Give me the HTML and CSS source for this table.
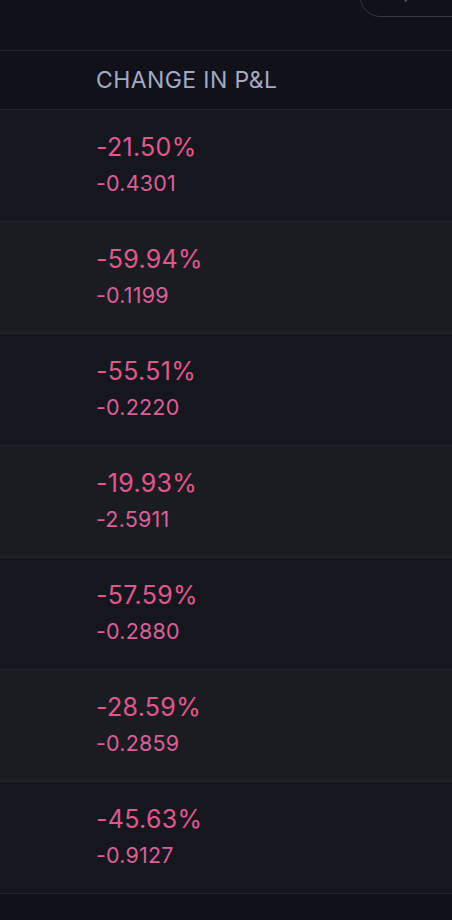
FILE: index.html
```html
<!DOCTYPE html>
<html>
<head>
<meta charset="utf-8">
<link rel="stylesheet" href="styles.css">
</head>
<body>
<div class="page">
  <div class="topbar">
    <div class="search"><span class="search-text">Input</span></div>
  </div>
  <div class="header"><span class="col-title">CHANGE IN P&amp;L</span></div>
  <div class="rows">
    <div class="row odd"><div class="cell"><div class="pct">-21.50%</div><div class="abs">-0.4301</div></div></div>
    <div class="row even"><div class="cell"><div class="pct">-59.94%</div><div class="abs">-0.1199</div></div></div>
    <div class="row odd"><div class="cell"><div class="pct">-55.51%</div><div class="abs">-0.2220</div></div></div>
    <div class="row even"><div class="cell"><div class="pct">-19.93%</div><div class="abs">-2.5911</div></div></div>
    <div class="row odd"><div class="cell"><div class="pct">-57.59%</div><div class="abs">-0.2880</div></div></div>
    <div class="row even"><div class="cell"><div class="pct">-28.59%</div><div class="abs">-0.2859</div></div></div>
    <div class="row odd"><div class="cell"><div class="pct">-45.63%</div><div class="abs">-0.9127</div></div></div>
  </div>
</div>
</body>
</html>
```
FILE: styles.css
```css
html, body {
  margin: 0;
  padding: 0;
  background: #111119;
}
body {
  font-family: Inter, "Noto Sans", sans-serif;
  width: 452px;
  height: 920px;
  overflow: hidden;
}
.page {
  display: flex;
  flex-direction: column;
}
.topbar {
  height: 50px;
  border-bottom: 1px solid #24252d;
  position: relative;
  overflow: hidden;
}
.search {
  position: absolute;
  left: 360px;
  top: -23px;
  width: 140px;
  height: 40px;
  border: 1px solid #353743;
  border-radius: 21px;
  box-sizing: border-box;
}
.search-text {
  position: absolute;
  left: 27px;
  top: 3px;
  color: #6d7080;
  font-size: 18px;
}
.header {
  height: 58px;
  border-bottom: 1px solid #24252d;
  display: flex;
  align-items: center;
  padding-left: 96px;
}
.col-title {
  color: #a4a9c4;
  font-size: 23px;
  letter-spacing: 0.4px;
}
.row {
  height: 111px;
  box-sizing: content-box;
  border-bottom: 1px solid #23242b;
  display: flex;
  align-items: center;
  padding-left: 96px;
}
.row.odd { background: #15161e; }
.row.even { background: #1b1c21; }
.cell {
  display: flex;
  flex-direction: column;
  gap: 9px;
  margin-top: -4px;
}
.pct {
  color: #e1588e;
  font-size: 25px;
  line-height: 30px;
  letter-spacing: 0.3px;
}
.abs {
  color: #d8619a;
  font-size: 21.5px;
  line-height: 24px;
  letter-spacing: 0.2px;
}
```
